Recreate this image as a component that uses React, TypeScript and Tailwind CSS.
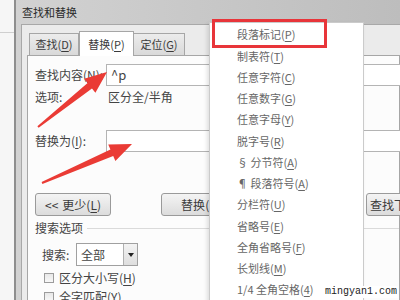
import React from 'react';

const font = { fontFamily: '"Noto Sans CJK SC", "Noto Sans", sans-serif' };

// label like 查找(D) with the shortcut letter underlined
const Acc = ({ text, k }: { text: string; k: string }) => (
  <span>
    {text}(<span className="underline underline-offset-2">{k}</span>)
  </span>
);

const menuItems: [string, string][] = [
  ['段落标记', 'P'],
  ['制表符', 'T'],
  ['任意字符', 'C'],
  ['任意数字', 'G'],
  ['任意字母', 'Y'],
  ['脱字号', 'R'],
  ['§ 分节符', 'A'],
  ['¶ 段落符号', 'A'],
  ['分栏符', 'U'],
  ['省略号', 'E'],
  ['全角省略号', 'F'],
  ['长划线', 'M'],
  ['1/4 全角空格', '4'],
];

function arrowPoints(x1: number, y1: number, x2: number, y2: number) {
  const L = Math.hypot(x2 - x1, y2 - y1);
  const ux = (x2 - x1) / L;
  const uy = (y2 - y1) / L;
  const nx = -uy;
  const ny = ux;
  const h = 22;
  const p = (d: number, w: number) => `${x1 + ux * d + nx * w},${y1 + uy * d + ny * w}`;
  return [p(0, 1), p(L - h, 3.5), p(L - h, 9), p(L, 0), p(L - h, -9), p(L - h, -3.5), p(0, -1)].join(' ');
}

const Btn = ({ children, className = '' }: { children?: React.ReactNode; className?: string }) => (
  <div
    className={`h-[23px] shrink-0 flex items-center justify-center rounded-[3px] border border-[#9a9a9a] bg-gradient-to-b from-[#f4f4f4] to-[#dcdcdc] text-[12px] text-[#3a3a3a] ${className}`}
  >
    {children}
  </div>
);

export default function App() {
  return (
    <div className="relative w-[400px] h-[300px] overflow-hidden flex bg-white" style={font}>
      {/* window behind the dialog */}
      <div className="w-[14px] shrink-0 bg-[#f6f6f6]">
        <div className="mt-[32px] border-t border-[#cfcfcf]" />
      </div>

      {/* dialog */}
      <div className="flex-1 flex flex-col border-l-2 border-[#8e8e8e] bg-gradient-to-r from-[#d2d2d2] to-[#bdbdbd] min-w-0">
        <div className="h-[24px] shrink-0 flex items-center pl-[6px] text-[11px] text-[#2a2a2a]">查找和替换</div>

        <div className="flex-1 ml-[5px] border-l border-t border-[#a8a8a8] bg-[#ebebeb] pl-[5px] pt-[6px] flex flex-col">
          {/* tabs */}
          <div className="h-[24px] shrink-0 flex items-end text-[11px] text-[#3a3a3a]">
            <div className="ml-[2px] w-[50px] h-[22px] flex items-center justify-center border border-b-0 border-[#a6a6a6] bg-gradient-to-b from-[#ececec] to-[#d9d9d9]">
              <Acc text="查找" k="D" />
            </div>
            <div className="relative z-10 w-[55px] h-[25px] -mb-px flex items-center justify-center border border-b-0 border-[#a6a6a6] bg-white">
              <Acc text="替换" k="P" />
            </div>
            <div className="w-[51px] h-[22px] flex items-center justify-center border border-b-0 border-l-0 border-[#a6a6a6] bg-gradient-to-b from-[#ececec] to-[#d9d9d9]">
              <Acc text="定位" k="G" />
            </div>
          </div>

          {/* tab page */}
          <div className="flex-1 bg-[#fcfcfc] border border-[#a6a6a6] pl-[7px] pt-[8px] flex flex-col text-[12px] text-[#444]">
            <div className="h-[22px] flex items-center">
              <div className="w-[71px] shrink-0">
                <Acc text="查找内容" k="N" />:
              </div>
              <div className="w-[400px] shrink-0 h-full border border-[#b4b4b4] bg-white flex items-center pl-[4px] text-[13px]">
                ^p
              </div>
            </div>
            <div className="mt-[1px] h-[20px] flex items-center">
              <div className="w-[73px] shrink-0">选项:</div>
              <div>区分全/半角</div>
            </div>
            <div className="mt-[23px] h-[22px] flex items-center">
              <div className="w-[71px] shrink-0">
                <Acc text="替换为" k="I" />:
              </div>
              <div className="w-[400px] shrink-0 h-full border border-[#b4b4b4] bg-white" />
            </div>

            <div className="mt-[41px] flex">
              <Btn className="w-[76px]">
                &lt;&lt; <span className="ml-[4px]"><Acc text="更少" k="L" /></span>
              </Btn>
              <Btn className="ml-[50px] w-[80px]">
                <Acc text="替换" k="R" />
              </Btn>
              {/* 全部替换 button, covered by the menu */}
              <Btn className="ml-[10px] w-[95px]" />
              <Btn className="ml-[20px] w-[100px] justify-start pl-[3px]">
                <Acc text="查找下一处" k="F" />
              </Btn>
            </div>

            <div className="mt-[5px] h-[14px] flex items-center">
              <div className="shrink-0">搜索选项</div>
              <div className="flex-1 ml-[4px] border-t border-[#dadada]" />
            </div>

            <div className="mt-[8px] h-[23px] flex items-center pl-[7px]">
              <div className="w-[34px] shrink-0">搜索:</div>
              <div className="w-[62px] h-full flex border border-[#a0a0a0] bg-white">
                <div className="flex-1 flex items-center pl-[4px]">全部</div>
                <div className="w-[14px] border-l border-[#b0b0b0] bg-gradient-to-b from-[#f3f3f3] to-[#dedede] flex items-center justify-center">
                  <div className="w-0 h-0 border-l-[3px] border-r-[3px] border-t-[4px] border-l-transparent border-r-transparent border-t-[#222]" />
                </div>
              </div>
            </div>

            <div className="mt-[4px] h-[16px] flex items-center pl-[9px]">
              <div className="w-[10px] h-[10px] border border-[#9c9c9c] bg-gradient-to-b from-[#e8e8e8] to-[#f8f8f8]" />
              <div className="ml-[5px]">
                <Acc text="区分大小写" k="H" />
              </div>
            </div>
            <div className="mt-[3px] h-[16px] flex items-center pl-[9px]">
              <div className="w-[10px] h-[10px] border border-[#9c9c9c] bg-gradient-to-b from-[#e8e8e8] to-[#f8f8f8]" />
              <div className="ml-[5px]">
                <Acc text="全字匹配" k="Y" />
              </div>
            </div>
          </div>
        </div>
      </div>

      {/* special character menu */}
      <div className="absolute left-[209px] top-[22px] w-[155px] h-[290px] bg-white border border-[#cbcbcb] shadow-[-2px_2px_4px_rgba(0,0,0,0.12)] pt-[1px] text-[11px] text-[#666]">
        {menuItems.map(([t, k], i) => (
          <div key={i} className="h-[21.25px] flex items-center pl-[27px]">
            <Acc text={t} k={k} />
          </div>
        ))}
      </div>
      <div className="absolute left-[212px] top-[19px] w-[115px] h-[29px] border-[3px] border-[#e8353a]" />

      {/* red arrows */}
      <svg className="absolute left-0 top-0" width="400" height="300" viewBox="0 0 400 300">
        <polygon points={arrowPoints(38, 127, 107, 72)} fill="#ea3b35" />
        <polygon points={arrowPoints(42, 183, 132, 144)} fill="#ea3b35" />
      </svg>

      <div
        className="absolute right-[2px] top-[286px] text-[10px] leading-[12px] text-[#222] bg-white px-[1px]"
        style={{ fontFamily: '"Liberation Mono", monospace' }}
      >
        mingyan1.com
      </div>
    </div>
  );
}
